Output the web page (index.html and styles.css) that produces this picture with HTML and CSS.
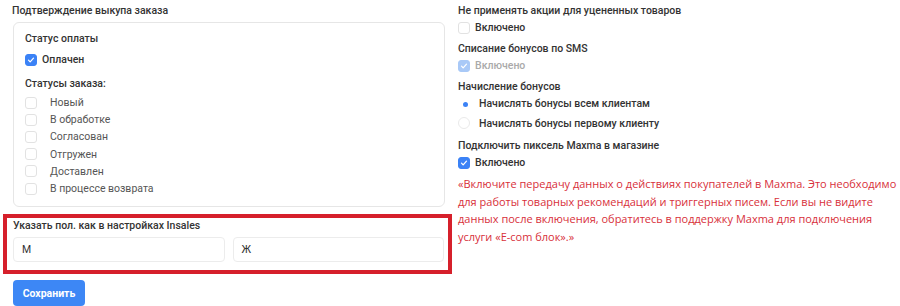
FILE: index.html
```html
<!DOCTYPE html>
<html lang="ru">
<head>
<meta charset="utf-8">
<link rel="stylesheet" href="styles.css">
</head>
<body>
<div class="page">
  <div class="col-left">
    <div class="title">Подтверждение выкупа заказа</div>
    <div class="card">
      <div class="sub">Статус оплаты</div>
      <label class="check-row strong"><span class="box checked"><svg viewBox="0 0 12 12"><path d="M3 6.2l2 2 4-4.4" fill="none" stroke="#fff" stroke-width="1.5" stroke-linecap="round" stroke-linejoin="round"/></svg></span>Оплачен</label>
      <div class="sub sub2">Статусы заказа:</div>
      <ul class="status-list">
        <li><span class="box"></span>Новый</li>
        <li><span class="box"></span>В обработке</li>
        <li><span class="box"></span>Согласован</li>
        <li><span class="box"></span>Отгружен</li>
        <li><span class="box"></span>Доставлен</li>
        <li><span class="box"></span>В процессе возврата</li>
      </ul>
    </div>
    <div class="highlight">
      <div class="sub">Указать пол. как в настройках Insales</div>
      <div class="inputs">
        <div class="input">М</div>
        <div class="input">Ж</div>
      </div>
    </div>
    <button class="btn">Сохранить</button>
  </div>
  <div class="col-right">
    <div class="group">
      <div class="label">Не применять акции для уцененных товаров</div>
      <label class="check-row strong"><span class="box"></span>Включено</label>
    </div>
    <div class="group">
      <div class="label">Списание бонусов по SMS</div>
      <label class="check-row strong disabled"><span class="box checked"><svg viewBox="0 0 12 12"><path d="M3 6.2l2 2 4-4.4" fill="none" stroke="#fff" stroke-width="1.5" stroke-linecap="round" stroke-linejoin="round"/></svg></span>Включено</label>
    </div>
    <div class="group">
      <div class="label">Начисление бонусов</div>
      <div class="radios">
        <label class="radio-row"><span class="radio on"></span>Начислять бонусы всем клиентам</label>
        <label class="radio-row"><span class="radio"></span>Начислять бонусы первому клиенту</label>
      </div>
    </div>
    <div class="group">
      <div class="label">Подключить пиксель Maxma в магазине</div>
      <label class="check-row strong"><span class="box checked"><svg viewBox="0 0 12 12"><path d="M3 6.2l2 2 4-4.4" fill="none" stroke="#fff" stroke-width="1.5" stroke-linecap="round" stroke-linejoin="round"/></svg></span>Включено</label>
    </div>
    <p class="warning">«Включите передачу данных о действиях покупателей в Maxma. Это необходимо для работы товарных рекомендаций и триггерных писем. Если вы не видите данных после включения, обратитесь в поддержку Maxma для подключения услуги «E-com блок».»</p>
  </div>
</div>
</body>
</html>
```

FILE: styles.css
```css
* { box-sizing: border-box; }
body {
  margin: 0;
  background: #fff;
  font-family: Roboto, "Noto Sans", sans-serif;
  color: #333;
}
.page {
  display: grid;
  grid-template-columns: 432px 1fr;
  column-gap: 12px;
  padding: 3px 10px 0 13px;
}
.col-left { display: flex; flex-direction: column; }
.title {
  font-size: 10.5px;
  font-weight: 500;
  line-height: 16px;
  margin-left: -1px;
  color: #333;
}
.card {
  margin-top: 3px;
  border: 1px solid #e6e6e6;
  border-radius: 6px;
  padding: 9px 11px 9px;
}
.sub {
  font-size: 10.5px;
  font-weight: 500;
  line-height: 14px;
  color: #333;
}
.sub2 { margin-top: 9px; }
.check-row {
  display: flex;
  align-items: center;
  gap: 5px;
  font-size: 10.5px;
  line-height: 16px;
  margin-top: 6px;
}
.check-row.strong { font-weight: 500; color: #333; }
.box {
  width: 12px;
  height: 12px;
  border: 1px solid #e2e2e2;
  border-radius: 3px;
  background: #fff;
  flex: none;
  display: inline-flex;
}
.box svg { width: 100%; height: 100%; }
.box.checked { background: #3b82f6; border-color: #3b82f6; }
.disabled { color: #aaa !important; }
.disabled .box.checked { background: #a9c9f7; border-color: #a9c9f7; }
.status-list {
  list-style: none;
  margin: 3px 0 0;
  padding: 0;
}
.status-list li {
  display: flex;
  align-items: center;
  gap: 13px;
  height: 17.2px;
  font-size: 10.5px;
  color: #555;
}
.highlight {
  margin: 7px -7px 0 -10px;
  border: 4px solid #d6202b;
  padding: 1px 4px 8px 6px;
}
.inputs {
  display: grid;
  grid-template-columns: 1fr 1fr;
  gap: 8px;
  margin-top: 4px;
}
.input {
  height: 25px;
  border: 1px solid #ececec;
  border-radius: 4px;
  padding: 0 8px;
  font-size: 10.5px;
  line-height: 23px;
  color: #333;
}
.btn {
  align-self: flex-start;
  margin-top: 6px;
  width: 72px;
  height: 26px;
  border: 0;
  border-radius: 4px;
  background: #3d87f5;
  color: #fff;
  font-family: Roboto, "Noto Sans", sans-serif;
  font-weight: 700;
  font-size: 10.5px;
  padding: 0;
}
.col-right { padding-left: 1px; }
.label {
  font-size: 10.5px;
  font-weight: 500;
  line-height: 16px;
  color: #333;
}
.group + .group { margin-top: 5px; }
.group .check-row { margin-top: 0; height: 17px; }
.radios { margin-top: -2px; }
.radio-row {
  display: flex;
  align-items: center;
  gap: 9px;
  height: 20px;
  font-size: 10.5px;
  font-weight: 500;
  color: #333;
}
.radio {
  width: 12px;
  height: 12px;
  border-radius: 50%;
  border: 1px solid #eaeaea;
  flex: none;
  position: relative;
}
.radio.on { border-color: transparent; }
.radio.on::after {
  content: "";
  position: absolute;
  left: 3.5px;
  top: 3.5px;
  width: 5px;
  height: 5px;
  border-radius: 50%;
  background: #3b82f6;
}
.warning {
  margin: 4px 0 0;
  width: 440px;
  font-family: "Open Sans", "Noto Sans", sans-serif;
  font-size: 11px;
  line-height: 17.5px;
  color: #d8303a;
}
```
